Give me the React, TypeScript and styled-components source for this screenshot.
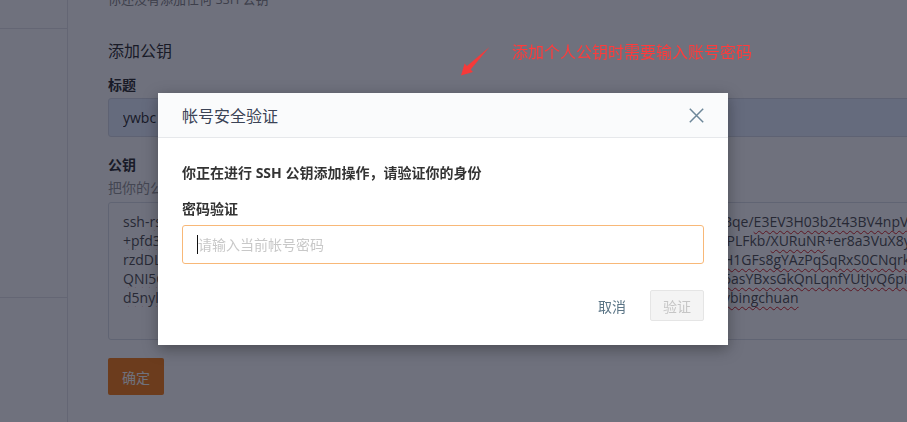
import React from 'react';
import styled, { createGlobalStyle } from 'styled-components';

const GlobalStyle = createGlobalStyle`
  html, body {
    margin: 0;
    padding: 0;
    height: 100%;
  }
  body {
    font-family: "Open Sans", "Noto Sans CJK SC", sans-serif;
    background: #fff;
    overflow: hidden;
  }
  * {
    box-sizing: border-box;
  }
`;

const Page = styled.div`
  display: flex;
  height: 422px;
  overflow: hidden;
  background: #fff;
`;

const Sidebar = styled.aside`
  width: 68px;
  flex-shrink: 0;
  border-right: 1px solid #e4e5ea;
  display: flex;
  flex-direction: column;
`;

const SideBlock = styled.div<{ $h: number }>`
  height: ${p => p.$h}px;
  border-bottom: 1px solid #e4e5ea;
`;

const Main = styled.main`
  flex: 1;
  min-width: 0;
  padding-left: 40px;
  margin-top: -11px;
  display: flex;
  flex-direction: column;
  align-items: flex-start;
`;

const EmptyHint = styled.p`
  margin: 0;
  font-size: 13px;
  line-height: 20px;
  color: #888;
`;

const SectionTitle = styled.h2`
  margin: 30px 0 0;
  font-size: 16px;
  font-weight: 400;
  line-height: 24px;
  color: #333;
`;

const FieldLabel = styled.label<{ $top: number }>`
  display: block;
  margin-top: ${p => p.$top}px;
  font-size: 14px;
  font-weight: 700;
  line-height: 20px;
  color: #333;
`;

const TitleInput = styled.input`
  margin-top: 3px;
  width: 900px;
  height: 39px;
  padding: 0 14px;
  border: 1px solid #d7dce6;
  border-radius: 3px;
  background: #e8f0fe;
  font-family: inherit;
  font-size: 14px;
  color: #333;
  outline: none;
`;

const FieldHint = styled.p`
  margin: 3px 0 0;
  font-size: 14px;
  line-height: 20px;
  color: #999;
`;

const KeyBox = styled.div`
  margin-top: 4px;
  width: 900px;
  height: 138px;
  overflow: hidden;
  border: 1px solid #dcdfe6;
  border-radius: 3px;
  padding: 9px 14px;
  font-size: 14px;
  line-height: 19px;
  color: #555;
`;

const KeyLine = styled.div`
  display: grid;
  grid-template-columns: 600px max-content;
  white-space: nowrap;
`;

const KeyHead = styled.span`
  overflow: hidden;
`;

const Misspelled = styled.span`
  text-decoration: underline wavy #d42a2a;
  text-decoration-thickness: 1px;
  text-underline-offset: 3px;
`;

const PrimaryButton = styled.button`
  margin-top: 18px;
  width: 56px;
  height: 37px;
  border: none;
  border-radius: 2px;
  background: #f7821b;
  color: #fff;
  font-family: inherit;
  font-size: 14px;
`;

const Overlay = styled.div`
  position: fixed;
  inset: 0;
  background: rgba(7, 10, 31, 0.58);
  padding: 93px 0 0 158px;
`;

const Modal = styled.div`
  width: 570px;
  background: #fff;
  box-shadow: 0 4px 14px rgba(0, 0, 0, 0.35);
`;

const ModalHeader = styled.div`
  height: 45px;
  padding: 0 24px;
  display: flex;
  align-items: center;
  justify-content: space-between;
  background: #fafbfc;
  border-bottom: 1px solid #e6e8eb;
`;

const ModalTitle = styled.h3`
  margin: 0;
  font-size: 16px;
  font-weight: 400;
  color: #3b4356;
`;

const CloseButton = styled.button`
  width: 15px;
  height: 15px;
  padding: 0;
  border: none;
  background: none;
  display: flex;
`;

const ModalBody = styled.div`
  padding: 25px 24px 24px;
  display: flex;
  flex-direction: column;
`;

const Notice = styled.p`
  margin: 0;
  font-size: 14px;
  font-weight: 700;
  line-height: 20px;
  color: #333;
`;

const PwdLabel = styled.label`
  margin-top: 16px;
  font-size: 14px;
  font-weight: 700;
  line-height: 20px;
  color: #333;
`;

const PwdField = styled.div`
  position: relative;
  margin-top: 6px;
  display: flex;
`;

const PwdInput = styled.input`
  flex: 1;
  height: 39px;
  padding: 0 15px;
  border: 1px solid #f8b878;
  border-radius: 3px;
  font-family: inherit;
  font-size: 14px;
  color: #333;
  caret-color: transparent;
  outline: none;
  &::placeholder {
    color: #c8c8c8;
  }
`;

const Caret = styled.span`
  position: absolute;
  left: 15px;
  top: 10px;
  width: 1px;
  height: 19px;
  background: #111;
`;

const ModalFooter = styled.div`
  margin-top: 26px;
  display: flex;
  justify-content: flex-end;
  align-items: center;
  gap: 24px;
`;

const TextButton = styled.button`
  padding: 0;
  border: none;
  background: none;
  font-family: inherit;
  font-size: 14px;
  color: #5b7586;
`;

const DisabledButton = styled.button`
  width: 54px;
  height: 31px;
  border: 1px solid #e5e5e5;
  border-radius: 2px;
  background: #f4f4f4;
  color: #c6c6c6;
  font-family: inherit;
  font-size: 14px;
`;

const Annotation = styled.div`
  position: absolute;
  left: 512px;
  top: 42px;
  font-size: 16px;
  line-height: 20px;
  color: #ff3b3b;
`;

const Arrow = styled.svg`
  position: absolute;
  left: 456px;
  top: 42px;
`;

const keyLines: { head: React.ReactNode; tail: React.ReactNode }[] = [
  {
    head: <>ssh-<Misspelled>rsa</Misspelled> AAAAB3NzaC1yc2EAAAADAQABAAABAQDk9Lw2m7PqXcR5tV0nJ8kHaZ</>,
    tail: <>Bqe/<Misspelled>E3EV3H03b2t43BV4npVeKd9sLmQ</Misspelled></>,
  },
  {
    head: <><Misspelled>+pfd3Wq0xYh6Zk2Tn</Misspelled> uJm8RbC1sVfA7oLgE4yXiD9pQwKz5NvH</>,
    tail: <>lPLFkb/<Misspelled>XURuNR</Misspelled>+er8a3VuX8yGz2hTq</>,
  },
  {
    head: <>rzdDLk4Vb8sNq2Ye7Mf1HgJcTu9Xa3WpZo6RiEl0KdSmBvCy5QnF</>,
    tail: <><Misspelled>H1GFs8gYAzPqSqRxS0CNqrkCmWe</Misspelled></>,
  },
  {
    head: <><Misspelled>QNI5Cx7Ho2Lr9Ua4Dk</Misspelled> Zt1Wm6Fe8Sy3Pj0Vn5Bg2Rc7Xq</>,
    tail: <><Misspelled>6asYBxsGkQnLqnfYUtJvQ6pifxR2</Misspelled></>,
  },
  {
    head: <><Misspelled>d5nyl8Qe3Mk0Ub7Jw</Misspelled> Ax2Tg9Hs4Lp1Cv6Zr root@ywbingchuan</>,
    tail: <><Misspelled>ybingchuan</Misspelled></>,
  },
];

const CloseIcon = () => (
  <svg width="15" height="15" viewBox="0 0 15 15">
    <path d="M0.8 0.8 L14.2 14.2 M14.2 0.8 L0.8 14.2" stroke="#6d8799" strokeWidth="1.5" fill="none" />
  </svg>
);

export default function App() {
  return (
    <>
      <GlobalStyle />
      <Page>
        <Sidebar>
          <SideBlock $h={29} />
          <SideBlock $h={269} />
        </Sidebar>
        <Main>
          <EmptyHint>你还没有添加任何 SSH 公钥</EmptyHint>
          <SectionTitle>添加公钥</SectionTitle>
          <FieldLabel $top={12}>标题</FieldLabel>
          <TitleInput readOnly value="ywbc" />
          <FieldLabel $top={18}>公钥</FieldLabel>
          <FieldHint>把你的公钥粘贴到这里，查看如何生成公钥</FieldHint>
          <KeyBox>
            {keyLines.map((l, i) => (
              <KeyLine key={i}>
                <KeyHead>{l.head}</KeyHead>
                <span>{l.tail}</span>
              </KeyLine>
            ))}
          </KeyBox>
          <PrimaryButton>确定</PrimaryButton>
        </Main>
      </Page>
      <Overlay>
        <Modal>
          <ModalHeader>
            <ModalTitle>帐号安全验证</ModalTitle>
            <CloseButton aria-label="关闭">
              <CloseIcon />
            </CloseButton>
          </ModalHeader>
          <ModalBody>
            <Notice>你正在进行 SSH 公钥添加操作，请验证你的身份</Notice>
            <PwdLabel>密码验证</PwdLabel>
            <PwdField>
              <PwdInput type="password" placeholder="请输入当前帐号密码" />
              <Caret />
            </PwdField>
            <ModalFooter>
              <TextButton>取消</TextButton>
              <DisabledButton disabled>验证</DisabledButton>
            </ModalFooter>
          </ModalBody>
        </Modal>
        <Arrow width="38" height="38" viewBox="0 0 38 38">
          <polygon
            points="33.5,5 14.6,27.5 17,29.9 5,33.5 8.6,21.5 11,23.9"
            fill="#f53a3a"
          />
        </Arrow>
        <Annotation>添加个人公钥时需要输入账号密码</Annotation>
      </Overlay>
    </>
  );
}
